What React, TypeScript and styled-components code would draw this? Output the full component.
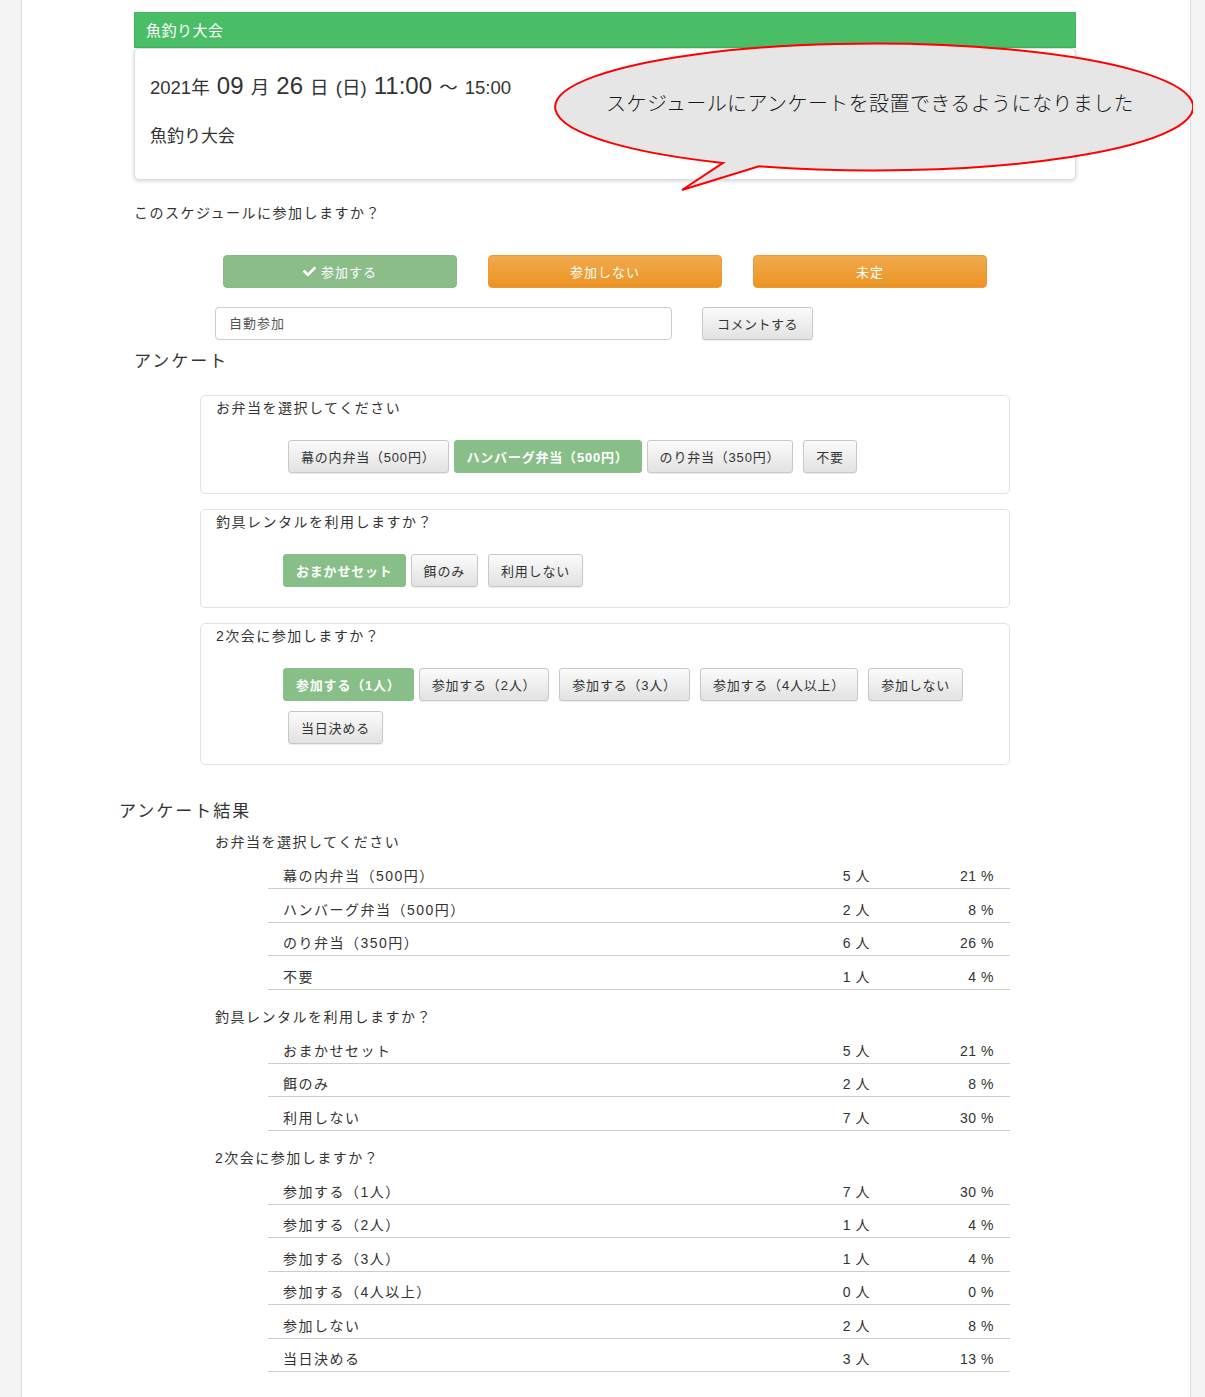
import React from 'react';
import styled, { createGlobalStyle } from 'styled-components';
import { FaCheck } from 'react-icons/fa';

const GlobalStyle = createGlobalStyle`
  body {
    margin: 0;
    background: #f4f4f4;
    font-family: 'Liberation Sans', 'Noto Sans CJK JP', sans-serif;
    color: #333;
  }
`;

const Panel = styled.div`
  box-sizing: border-box;
  width: 1170px;
  min-height: 1397px;
  margin-left: 21px;
  padding: 12px 0 40px 112px;
  background: #fff;
  border-left: 1px solid #ddd;
  border-right: 1px solid #ddd;
`;

const Content = styled.div`
  position: relative;
  width: 942px;
`;

const EventCard = styled.div`
  position: relative;
`;

const CardHeader = styled.div`
  height: 36px;
  line-height: 36px;
  padding-left: 11px;
  background: #4abe67;
  border: 1px solid #45b462;
  box-sizing: border-box;
  color: #fff;
  font-size: 15px;
  letter-spacing: 0.5px;
`;

const CardBody = styled.div`
  box-sizing: border-box;
  height: 132px;
  padding: 22px 15px 0;
  background: #fff;
  border: 1px solid #ddd;
  border-radius: 5px;
  box-shadow: 0 1px 4px rgba(0, 0, 0, 0.18);
`;

const DateLine = styled.div`
  line-height: 30px;
  white-space: nowrap;
  word-spacing: 2px;
`;

const DatePart = styled.span<{ $big?: boolean }>`
  font-size: ${(p) => (p.$big ? '24px' : '18.5px')};
`;

const EventTitle = styled.div`
  margin-top: 22px;
  font-size: 17px;
  line-height: 22px;
`;

const Bubble = styled.div`
  position: absolute;
  left: 413px;
  top: 26px;
  width: 646px;
  height: 156px;
  z-index: 2;
  svg {
    position: absolute;
    left: 0;
    top: 0;
  }
`;

const BubbleText = styled.div`
  position: absolute;
  left: 0;
  width: 646px;
  top: 51px;
  text-align: center;
  font-family: 'Noto Sans CJK JP', sans-serif;
  font-weight: 300;
  font-size: 20px;
  line-height: 28px;
  letter-spacing: 0.4px;
  color: #1a1a1a;
`;

const Prompt = styled.div`
  margin-top: 23px;
  font-size: 14px;
  line-height: 20px;
  letter-spacing: 1.5px;
`;

const ActionRow = styled.div`
  display: flex;
  justify-content: center;
  gap: 31px;
  margin-top: 32px;
`;

const ActionButton = styled.button<{ $tone: 'green' | 'orange' }>`
  display: flex;
  align-items: center;
  justify-content: center;
  gap: 5px;
  width: 234px;
  height: 33px;
  border: 1px solid ${(p) => (p.$tone === 'green' ? '#87bb86' : '#e99a36')};
  border-radius: 4px;
  background: ${(p) =>
    p.$tone === 'green' ? '#8bbd89' : 'linear-gradient(#f1aa4c, #ec9423)'};
  color: #fff;
  font-family: inherit;
  font-size: 13px;
  letter-spacing: 1px;
`;

const CommentRow = styled.div`
  display: flex;
  align-items: center;
  gap: 30px;
  margin: 19px 0 0 81px;
`;

const CommentInput = styled.input`
  box-sizing: border-box;
  width: 457px;
  height: 33px;
  padding: 0 13px;
  border: 1px solid #ccc;
  border-radius: 4px;
  font-family: inherit;
  font-size: 13px;
  letter-spacing: 1px;
  &::placeholder {
    color: #555;
  }
`;

const GrayButton = styled.button`
  box-sizing: border-box;
  height: 33px;
  padding: 0 14px;
  border: 1px solid #c8c8c8;
  border-radius: 3px;
  background: linear-gradient(#fbfbfb, #e2e2e2);
  box-shadow: 0 1px 1px rgba(0, 0, 0, 0.08);
  color: #333;
  font-family: inherit;
  font-size: 13px;
  letter-spacing: 0.5px;
`;

const SectionTitle = styled.div<{ $shift?: number; $top?: number }>`
  margin: ${(p) => p.$top ?? 0}px 0 0 ${(p) => p.$shift ?? 0}px;
  font-size: 17px;
  line-height: 24px;
  letter-spacing: 2px;
`;

const SurveyList = styled.div`
  display: flex;
  flex-direction: column;
  gap: 15px;
  width: 810px;
  margin: 21px 0 0 66px;
`;

const SurveyBox = styled.div`
  padding: 2px 16px 20px 15px;
  border: 1px solid #e2e2e2;
  border-radius: 5px;
`;

const Question = styled.div`
  font-size: 14px;
  line-height: 20px;
  letter-spacing: 1.5px;
`;

const OptionGroup = styled.div`
  display: flex;
  flex-wrap: wrap;
  row-gap: 10px;
  margin-top: 22px;
  padding-left: 67px;
`;

const OptionButton = styled.button<{ $selected?: boolean }>`
  box-sizing: border-box;
  height: 33px;
  margin: ${(p) => (p.$selected ? '0' : '0 5px')};
  padding: 0 12px;
  border: 1px solid ${(p) => (p.$selected ? '#88be88' : '#c8c8c8')};
  border-radius: 3px;
  background: ${(p) => (p.$selected ? '#88be88' : 'linear-gradient(#fbfbfb, #e2e2e2)')};
  box-shadow: ${(p) => (p.$selected ? 'none' : '0 1px 1px rgba(0, 0, 0, 0.08)')};
  color: ${(p) => (p.$selected ? '#fff' : '#333')};
  font-family: inherit;
  font-size: 13px;
  letter-spacing: 0.8px;
  font-weight: ${(p) => (p.$selected ? 700 : 400)};
`;

const Results = styled.div`
  margin-top: 35px;
`;

const ResultQuestion = styled.div`
  margin: 8px 0 3.5px 81px;
  font-size: 14px;
  line-height: 20px;
  letter-spacing: 1.5px;
  & ~ & {
    margin-top: 17px;
  }
`;

const ResultTable = styled.div`
  width: 742px;
  margin-left: 134px;
`;

const ResultRow = styled.div`
  box-sizing: border-box;
  display: grid;
  grid-template-columns: 1fr 80px 124px;
  align-items: end;
  height: 33.5px;
  padding: 0 16px 2px 15px;
  border-bottom: 1px solid #ccc;
  font-size: 14px;
  line-height: 20px;
  letter-spacing: 1.5px;
`;

const Num = styled.span`
  text-align: right;
  letter-spacing: 0.5px;
`;

const surveys = [
  {
    q: 'お弁当を選択してください',
    options: ['幕の内弁当（500円）', 'ハンバーグ弁当（500円）', 'のり弁当（350円）', '不要'],
    selected: 1,
    results: [
      [5, 21],
      [2, 8],
      [6, 26],
      [1, 4],
    ],
  },
  {
    q: '釣具レンタルを利用しますか？',
    options: ['おまかせセット', '餌のみ', '利用しない'],
    selected: 0,
    results: [
      [5, 21],
      [2, 8],
      [7, 30],
    ],
  },
  {
    q: '2次会に参加しますか？',
    options: [
      '参加する（1人）',
      '参加する（2人）',
      '参加する（3人）',
      '参加する（4人以上）',
      '参加しない',
      '当日決める',
    ],
    selected: 0,
    results: [
      [7, 30],
      [1, 4],
      [1, 4],
      [0, 0],
      [2, 8],
      [3, 13],
    ],
  },
];

const SpeechBubble = () => (
  <Bubble>
    <svg width="646" height="156" viewBox="0 0 646 156">
      <path
        d="M 212 128.2 A 319 63.5 0 1 0 176 124.9 L 135 152 Z"
        fill="#e6e6e6"
        stroke="#f00"
        strokeWidth="2"
      />
    </svg>
    <BubbleText>スケジュールにアンケートを設置できるようになりました</BubbleText>
  </Bubble>
);

const App = () => {
  return (
    <>
      <GlobalStyle />
      <Panel>
        <Content>
          <EventCard>
            <CardHeader>魚釣り大会</CardHeader>
            <CardBody>
              <DateLine>
                <DatePart>2021年 </DatePart>
                <DatePart $big>09</DatePart>
                <DatePart> 月 </DatePart>
                <DatePart $big>26</DatePart>
                <DatePart> 日 (日) </DatePart>
                <DatePart $big>11:00</DatePart>
                <DatePart> 〜 15:00</DatePart>
              </DateLine>
              <EventTitle>魚釣り大会</EventTitle>
            </CardBody>
            <SpeechBubble />
          </EventCard>

          <Prompt>このスケジュールに参加しますか？</Prompt>
          <ActionRow>
            <ActionButton $tone="green">
              <FaCheck size={13} />
              参加する
            </ActionButton>
            <ActionButton $tone="orange">参加しない</ActionButton>
            <ActionButton $tone="orange">未定</ActionButton>
          </ActionRow>
          <CommentRow>
            <CommentInput placeholder="自動参加" />
            <GrayButton>コメントする</GrayButton>
          </CommentRow>

          <SectionTitle $top={10}>アンケート</SectionTitle>
          <SurveyList>
            {surveys.map((s) => (
              <SurveyBox key={s.q}>
                <Question>{s.q}</Question>
                <OptionGroup>
                  {s.options.map((o, i) => (
                    <OptionButton key={o} $selected={i === s.selected}>
                      {o}
                    </OptionButton>
                  ))}
                </OptionGroup>
              </SurveyBox>
            ))}
          </SurveyList>

          <Results>
            <SectionTitle $shift={-15}>アンケート結果</SectionTitle>
            {surveys.map((s) => (
              <React.Fragment key={s.q}>
                <ResultQuestion>{s.q}</ResultQuestion>
                <ResultTable>
                  {s.options.map((o, i) => (
                    <ResultRow key={o}>
                      <span>{o}</span>
                      <Num>{s.results[i][0]} 人</Num>
                      <Num>{s.results[i][1]} %</Num>
                    </ResultRow>
                  ))}
                </ResultTable>
              </React.Fragment>
            ))}
          </Results>
        </Content>
      </Panel>
    </>
  );
};

export default App;
